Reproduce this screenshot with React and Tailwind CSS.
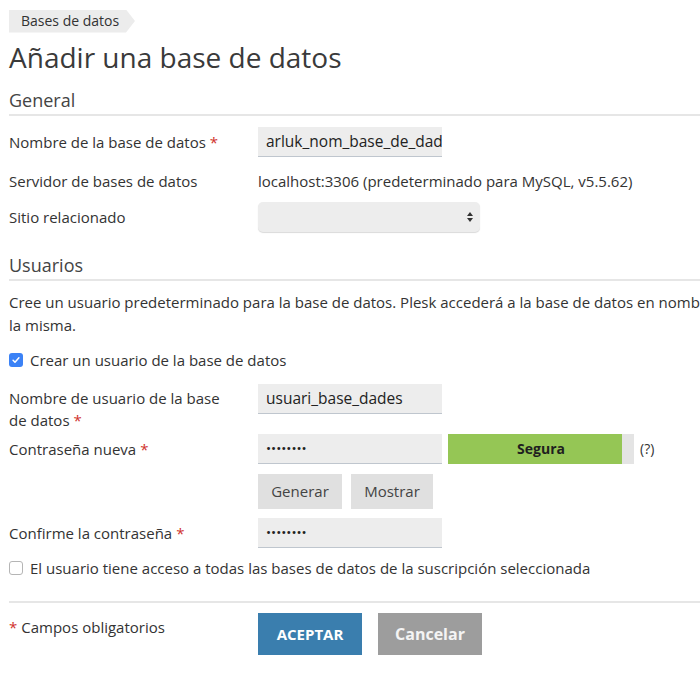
import React from 'react'

const FONT = { fontFamily: '"Open Sans", "Noto Sans", sans-serif' }

// ── Small pieces ─────────────────────────────────────────────
function Req() {
  return <span className="ml-[4px] text-[#d0312d]">*</span>
}

function TextInput({ value, password }) {
  return (
    <div
      className={`flex h-[30px] w-[184px] items-center overflow-hidden whitespace-nowrap border-b border-[#bfc6ce] bg-[#ededed] px-[8px] text-[#222] ${
        password ? 'text-[13.5px] tracking-[0px]' : 'text-[15.5px]'
      }`}
    >
      {value}
    </div>
  )
}

function CheckBox({ checked }) {
  if (checked) {
    return (
      <span className="flex h-[14px] w-[14px] items-center justify-center rounded-[3px] bg-[#3b82f6]">
        <svg viewBox="0 0 12 12" className="h-[10px] w-[10px]" fill="none" stroke="white" strokeWidth="1.8" strokeLinecap="round" strokeLinejoin="round">
          <path d="M2.5 6.3l2.3 2.3 4.7-5.2" />
        </svg>
      </span>
    )
  }
  return <span className="h-[14px] w-[14px] rounded-[3px] border border-[#b5b5b5] bg-white" />
}

function SectionTitle({ children, className = '' }) {
  return (
    <div className={`border-b-2 border-[#e6e6e6] pb-[2px] text-[18px] leading-[24px] text-[#444] ${className}`}>
      {children}
    </div>
  )
}

function Row({ label, children, className = '' }) {
  return (
    <div className={`flex ${className}`}>
      <div className="w-[249px] shrink-0">{label}</div>
      <div className="flex">{children}</div>
    </div>
  )
}

// ── Page ─────────────────────────────────────────────────────
export default function App() {
  return (
    <div style={FONT} className="h-[685px] w-[700px] overflow-hidden bg-white pl-[9px] pt-[9px] text-[15px] leading-[22px] text-[#333]">
      <div className="w-[735px]">
        {/* Breadcrumb */}
        <div className="inline-flex h-[23px] w-[126px] items-center bg-[#ececec] pl-[12px] text-[14px] text-[#333] [clip-path:polygon(0_0,calc(100%-9px)_0,100%_50%,calc(100%-9px)_100%,0_100%)]">
          Bases de datos
        </div>

        <h1 className="mt-[7px] text-[28px] leading-[34px] text-[#3a3a3a]">Añadir una base de datos</h1>

        <SectionTitle className="mt-[14px]">General</SectionTitle>

        <Row className="mt-[11px] items-center" label={<span>Nombre de la base de datos<Req /></span>}>
          <TextInput value="arluk_nom_base_de_dades" />
        </Row>

        <Row className="mt-[9px] h-[30px] items-center" label="Servidor de bases de datos">
          <span>localhost:3306 (predeterminado para MySQL, v5.5.62)</span>
        </Row>

        <Row className="mt-[6px] items-center" label="Sitio relacionado">
          <div className="flex h-[30px] w-[222px] items-center justify-end rounded-[5px] bg-[#ededed] pr-[6px] shadow-[0_1px_1px_rgba(0,0,0,0.15)]">
            <svg viewBox="0 0 8 12" className="h-[12px] w-[8px]" fill="#333">
              <path d="M4 1l3 4H1z M4 11l3-4H1z" />
            </svg>
          </div>
        </Row>

        <SectionTitle className="mt-[21px]">Usuarios</SectionTitle>

        <p className="mt-[10px] leading-[23px]">
          Cree un usuario predeterminado para la base de datos. Plesk accederá a la base de datos en nombre de la
          misma.
        </p>

        <label className="mt-[12px] flex h-[22px] items-center gap-[7px]">
          <CheckBox checked />
          <span>Crear un usuario de la base de datos</span>
        </label>

        <Row
          className="mt-[13px]"
          label={
            <div className="w-[230px] pt-[3px]">
              Nombre de usuario de la base de datos<Req />
            </div>
          }
        >
          <TextInput value="usuari_base_dades" />
        </Row>

        <Row className="mt-[3px]" label={<div className="pt-[4px]">Contraseña nueva<Req /></div>}>
          <div className="flex flex-col">
            <div className="flex items-center">
              <TextInput value="••••••••" password />
              <div className="ml-[6px] flex h-[30px] w-[186px] items-center justify-center bg-[linear-gradient(to_right,#95c655_174px,#e4e4e4_174px)] text-[14px] font-bold text-[#1f1f1f]">
                Segura
              </div>
              <span className="ml-[6px] text-[14px]">(?)</span>
            </div>
            <div className="mt-[10px] flex gap-[9px]">
              <button className="h-[35px] w-[84px] bg-[#e0e0e0] text-[15px] text-[#444]">Generar</button>
              <button className="h-[35px] w-[82px] bg-[#e0e0e0] text-[15px] text-[#444]">Mostrar</button>
            </div>
          </div>
        </Row>

        <Row className="mt-[9px] items-center" label={<span>Confirme la contraseña<Req /></span>}>
          <TextInput value="••••••••" password />
        </Row>

        <label className="mt-[9px] flex h-[22px] items-center gap-[7px]">
          <CheckBox />
          <span>El usuario tiene acceso a todas las bases de datos de la suscripción seleccionada</span>
        </label>

        <div className="mt-[22px] border-t-2 border-[#e6e6e6]" />

        <Row
          className="mt-[10px]"
          label={
            <div className="pt-[3px]">
              <span className="mr-[4px] text-[#d0312d]">*</span>Campos obligatorios
            </div>
          }
        >
          <div className="flex gap-[16px]">
            <button className="h-[42px] w-[104px] bg-[#3a7eae] text-[15px] font-bold text-white">ACEPTAR</button>
            <button className="h-[42px] w-[104px] bg-[#9d9d9d] text-[16px] font-bold text-[#f4f4f4]">Cancelar</button>
          </div>
        </Row>
      </div>
    </div>
  )
}
